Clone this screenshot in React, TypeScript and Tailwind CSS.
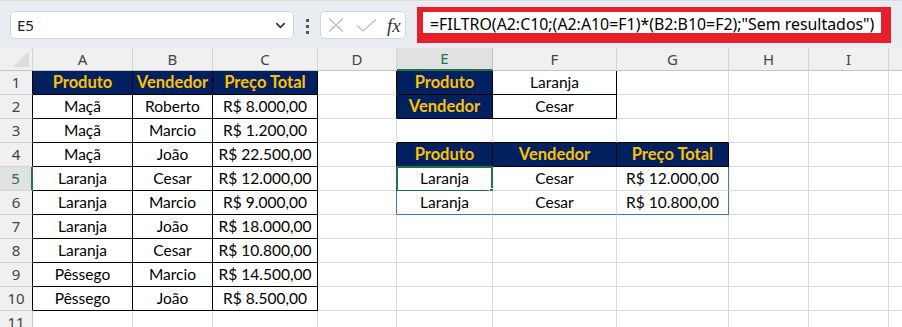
import { ChevronDown } from "lucide-react";

const COLS = ["A", "B", "C", "D", "E", "F", "G", "H", "I", "J"];
const ROWS = [1, 2, 3, 4, 5, 6, 7, 8, 9, 10, 11];

const HEAD = ["Produto", "Vendedor", "Preço Total"];
const DATA: string[][] = [
  ["Maçã", "Roberto", "R$ 8.000,00"],
  ["Maçã", "Marcio", "R$ 1.200,00"],
  ["Maçã", "João", "R$ 22.500,00"],
  ["Laranja", "Cesar", "R$ 12.000,00"],
  ["Laranja", "Marcio", "R$ 9.000,00"],
  ["Laranja", "João", "R$ 18.000,00"],
  ["Laranja", "Cesar", "R$ 10.800,00"],
  ["Pêssego", "Marcio", "R$ 14.500,00"],
  ["Pêssego", "João", "R$ 8.500,00"],
];
const RESULT: string[][] = [
  ["Laranja", "Cesar", "R$ 12.000,00"],
  ["Laranja", "Cesar", "R$ 10.800,00"],
];

type Cell = { text: string; head: boolean };

function cellAt(r: number, c: number): Cell {
  if (c <= 2 && r === 1) return { text: HEAD[c], head: true };
  if (c <= 2 && r >= 2 && r <= 10) return { text: DATA[r - 2][c], head: false };
  if (c === 4 && r === 1) return { text: "Produto", head: true };
  if (c === 4 && r === 2) return { text: "Vendedor", head: true };
  if (c === 5 && r === 1) return { text: "Laranja", head: false };
  if (c === 5 && r === 2) return { text: "Cesar", head: false };
  if (r === 4 && c >= 4 && c <= 6) return { text: HEAD[c - 4], head: true };
  if ((r === 5 || r === 6) && c >= 4 && c <= 6) return { text: RESULT[r - 5][c - 4], head: false };
  return { text: "", head: false };
}

function bordered(r: number, c: number) {
  return (
    (r >= 1 && r <= 10 && c <= 2) ||
    (r >= 1 && r <= 2 && (c === 4 || c === 5)) ||
    (r === 4 && c >= 4 && c <= 6)
  );
}

const RIGHT = { gray: "border-r-[#dadada]", black: "border-r-black", blue: "border-r-[#4472c4]" };
const BOTTOM = { gray: "border-b-[#dadada]", black: "border-b-black", blue: "border-b-[#4472c4]" };

function rightColor(r: number, c: number) {
  if (bordered(r, c) || bordered(r, c + 1)) return RIGHT.black;
  if ((r === 5 || r === 6) && (c === 3 || c === 6)) return RIGHT.blue;
  return RIGHT.gray;
}

function bottomColor(r: number, c: number) {
  if (bordered(r, c) || bordered(r + 1, c)) return BOTTOM.black;
  if (r === 6 && c >= 4 && c <= 6) return BOTTOM.blue;
  return BOTTOM.gray;
}

function FormulaBar() {
  return (
    <div className="flex h-[48px] items-start border-t border-t-[#d9dde2] bg-[#e9edf1]">
      <div className="ml-[10px] mt-[10px] flex h-[28px] w-[284px] items-center justify-between rounded-[5px] border border-[#d3d7dc] bg-white pl-[6px] pr-[5px]">
        <span className="text-[15px] text-[#222] [font-family:'Noto_Sans',sans-serif]">E5</span>
        <ChevronDown size={15} strokeWidth={2.6} className="text-[#333]" />
      </div>
      <div className="ml-[12px] mt-[18px] flex flex-col gap-[3px]">
        <span className="block h-[3px] w-[3px] bg-[#555]" />
        <span className="block h-[3px] w-[3px] bg-[#555]" />
        <span className="block h-[3px] w-[3px] bg-[#555]" />
      </div>
      <div className="ml-[11px] mt-[10px] flex h-[28px] w-[86px] items-center rounded-[5px] border border-[#d3d7dc] bg-white">
        <svg width="16" height="14" viewBox="0 0 16 14" className="ml-[7px]">
          <path d="M1 0.5 L15 13.5 M15 0.5 L1 13.5" stroke="#bdbdbd" strokeWidth="1.2" fill="none" />
        </svg>
        <svg width="21" height="13" viewBox="0 0 21 13" className="ml-[12px]">
          <path d="M1 6.5 L7 12 L20 0.5" stroke="#bdbdbd" strokeWidth="1.2" fill="none" />
        </svg>
        <span className="ml-[10px] text-[19px] italic leading-none text-[#333] [font-family:'Liberation_Serif',serif]">fx</span>
      </div>
      <div className="ml-[11px] mt-[6px] flex h-[36px] w-[474px] items-center border-b-[10px] border-l-[6px] border-r-[10px] border-t-[5px] border-[#e81f2a] bg-white pl-[7px] pt-[4px]">
        <span className="whitespace-nowrap text-[15.9px] leading-[17px] text-black [font-family:'Noto_Sans',sans-serif]">
          =FILTRO(A2:C10;(A2:A10=F1)*(B2:B10=F2);"Sem resultados")
        </span>
      </div>
    </div>
  );
}

function Sheet() {
  return (
    <div className="grid grid-cols-[33px_100px_80px_105px_79px_96px_124px_112px_80px_80px_80px] grid-rows-[23px_repeat(11,24px)] [font-family:Lato,sans-serif]">
      <div className="flex items-end justify-end border-b border-r border-b-[#c4c4c4] border-r-[#d4d4d4] bg-[#f0f0f0] p-[3px]">
        <svg width="16" height="16" viewBox="0 0 16 16">
          <path d="M16 0 L16 16 L0 16 Z" fill="#dcdcdc" />
        </svg>
      </div>
      {COLS.map((c) => (
        <div
          key={c}
          className={
            c === "E"
              ? "flex items-center justify-center border-b-2 border-r border-b-[#217346] border-r-[#c4c4c4] bg-[#e1e1e1] text-[15px] text-[#217346] [font-family:'Noto_Sans',sans-serif]"
              : "flex items-center justify-center border-b border-r border-b-[#c4c4c4] border-r-[#d4d4d4] bg-[#f0f0f0] text-[15px] text-[#444] [font-family:'Noto_Sans',sans-serif]"
          }
        >
          {c}
        </div>
      ))}
      {ROWS.map((r) => (
        <Row key={r} r={r} />
      ))}
    </div>
  );
}

function Row({ r }: { r: number }) {
  const headCls =
    r === 5
      ? "flex items-center justify-center border-b border-r-2 border-b-[#d4d4d4] border-r-[#217346] bg-[#e1e1e1] text-[15px] text-[#217346] [font-family:'Noto_Sans',sans-serif]"
      : r <= 10
        ? "flex items-center justify-center border-b border-r border-b-[#d4d4d4] border-r-black bg-[#f0f0f0] text-[15px] text-[#444] [font-family:'Noto_Sans',sans-serif]"
        : "flex items-center justify-center border-b border-r border-b-[#d4d4d4] border-r-[#c4c4c4] bg-[#f0f0f0] text-[15px] text-[#444] [font-family:'Noto_Sans',sans-serif]";
  return (
    <>
      <div className={headCls}>{r}</div>
      {COLS.map((_, c) => {
        const cell = cellAt(r, c);
        const base = `relative flex items-center justify-center whitespace-nowrap border-b border-r ${rightColor(r, c)} ${bottomColor(r, c)}`;
        const look = cell.head
          ? "bg-[#002060] text-[16.5px] font-bold text-[#ffc000]"
          : "bg-white text-[15.5px] text-black";
        return (
          <div key={c} className={`${base} ${look}`}>
            {cell.text}
            {r === 5 && c === 4 && (
              <>
                <div className="absolute -left-[1px] -top-[1px] bottom-[-2px] right-[-1px] border-2 border-[#217346]" />
                <div className="absolute bottom-[-5px] right-[-4px] h-[7px] w-[7px] border border-white bg-[#217346]" />
              </>
            )}
          </div>
        );
      })}
    </>
  );
}

export default function App() {
  return (
    <div className="h-[327px] w-[902px] overflow-hidden bg-white">
      <FormulaBar />
      <Sheet />
    </div>
  );
}
